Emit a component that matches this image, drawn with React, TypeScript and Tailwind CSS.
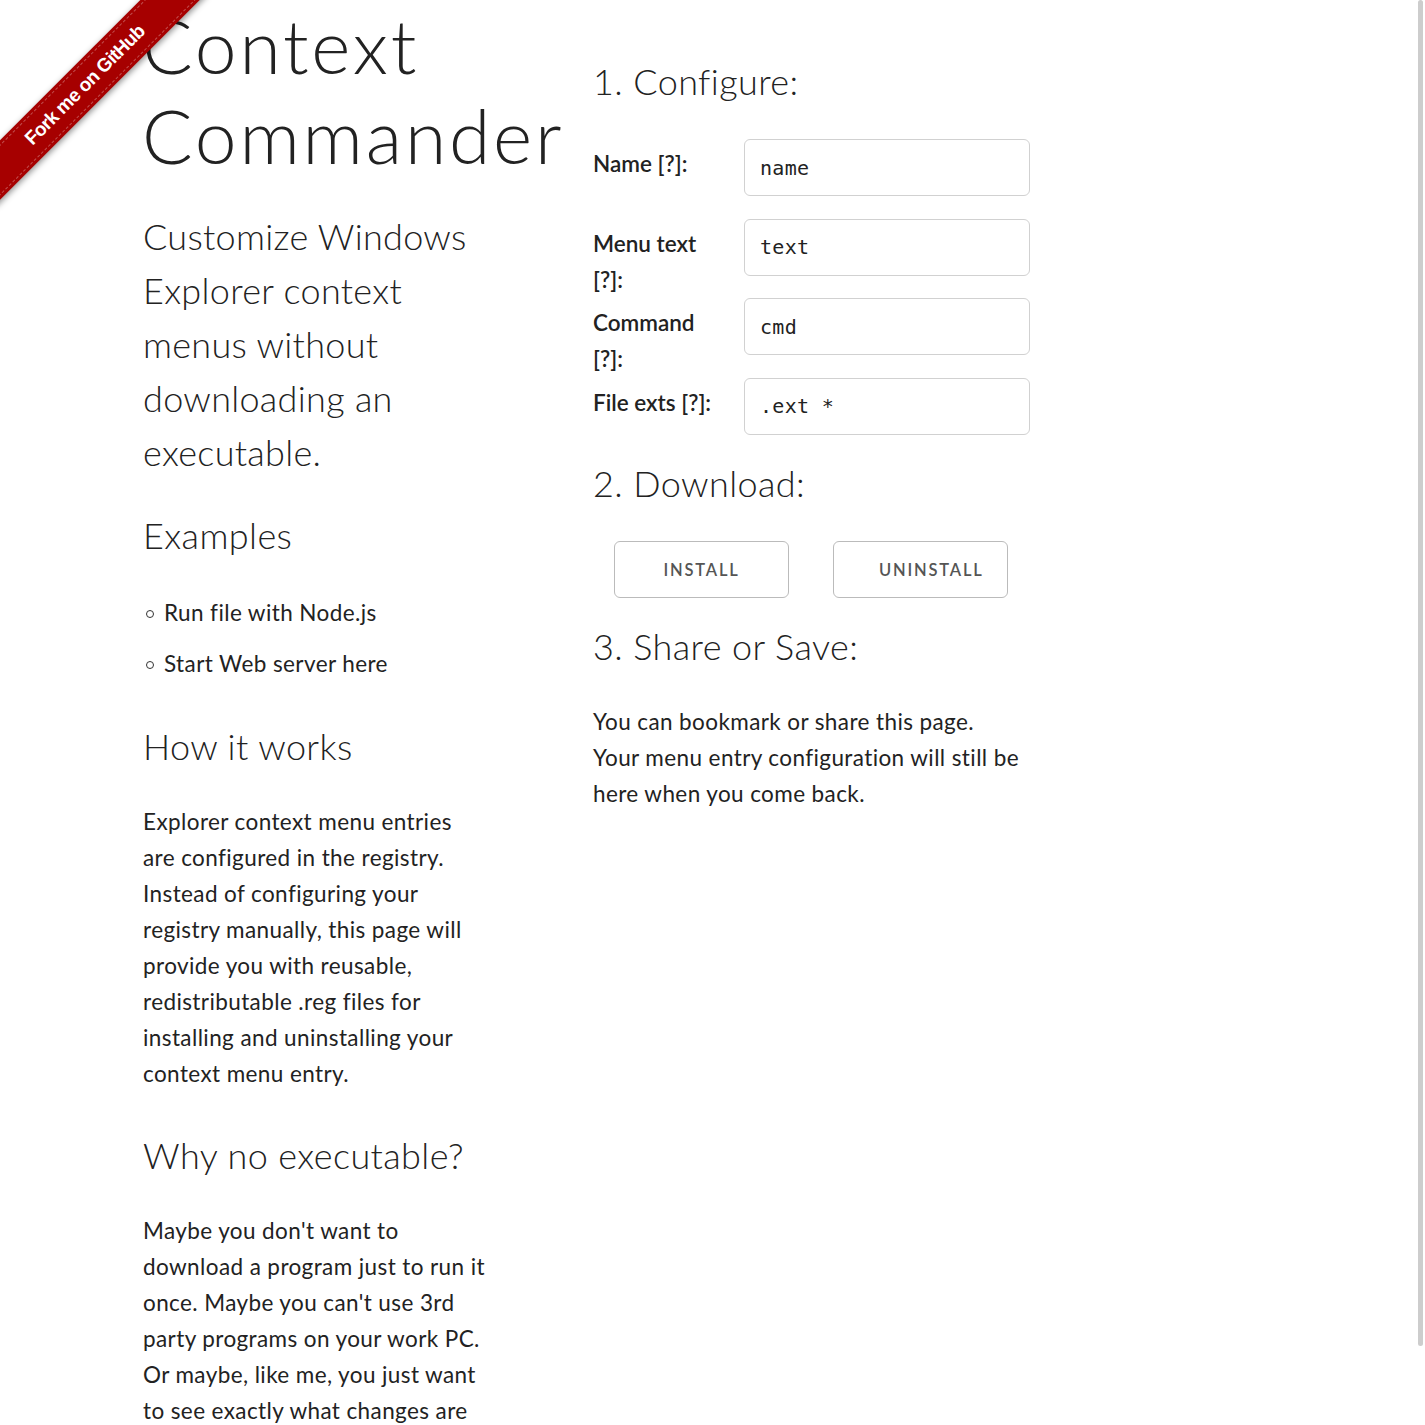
import React from "react";

function Bullet({ children }: { children: React.ReactNode }) {
  return (
    <li className="flex items-center mb-[15px] h-[36px]">
      <span className="inline-block w-[8px] h-[8px] rounded-full border border-[#333] ml-[3px] mr-[10px] mt-[2px]" />
      <span className="whitespace-nowrap">{children}</span>
    </li>
  );
}

function Row({ label, value }: { label: React.ReactNode; value: string }) {
  return (
    <div className="flex items-start">
      <div className="w-[151px] pt-[7px] font-semibold whitespace-nowrap tracking-[0px]">{label}</div>
      <div className="w-[286px] h-[57px] mb-[22.5px] border border-[#d1d1d1] rounded-[6px] flex items-center px-[15px] text-[20px] [font-family:'DejaVu_Sans_Mono',monospace] text-[#222] whitespace-pre tracking-[0.3px]">
        {value}
      </div>
    </div>
  );
}

export default function App() {
  return (
    <div className="relative h-[1425px] overflow-hidden bg-white text-[#222] [font-family:Lato,'Open_Sans',sans-serif] text-[22.5px] leading-[36px] tracking-[0.4px]">
      <div className="flex pl-[143px]">
        {/* Left column */}
        <div className="w-[360px] shrink-0">
          <h1 className="text-[75px] leading-[90px] font-light whitespace-nowrap tracking-[2.8px] -ml-[1px]">
            Context
            <br />
            Commander
          </h1>
          <div className="mt-[29px] text-[36px] leading-[54px] font-light whitespace-nowrap tracking-[0.3px]">
            Customize Windows
            <br />
            Explorer context
            <br />
            menus without
            <br />
            downloading an
            <br />
            executable.
          </div>
          <h4 className="mt-[29px] text-[36px] leading-[54px] font-light">Examples</h4>
          <ul className="mt-[33px]">
            <Bullet>Run file with Node.js</Bullet>
            <Bullet>Start Web server here</Bullet>
          </ul>
          <h4 className="mt-[37px] text-[36px] leading-[54px] font-light">How it works</h4>
          <p className="mt-[31px] whitespace-nowrap">
            Explorer context menu entries
            <br />
            are configured in the registry.
            <br />
            Instead of configuring your
            <br />
            registry manually, this page will
            <br />
            provide you with reusable,
            <br />
            redistributable .reg files for
            <br />
            installing and uninstalling your
            <br />
            context menu entry.
          </p>
          <h4 className="mt-[36px] text-[36px] leading-[54px] font-light">Why no executable?</h4>
          <p className="mt-[31px] whitespace-nowrap">
            Maybe you don't want to
            <br />
            download a program just to run it
            <br />
            once. Maybe you can't use 3rd
            <br />
            party programs on your work PC.
            <br />
            Or maybe, like me, you just want
            <br />
            to see exactly what changes are
          </p>
        </div>

        {/* Right column */}
        <div className="ml-[90px] w-[450px] shrink-0">
          <h4 className="mt-[54px] text-[36px] leading-[54px] font-light">1. Configure:</h4>
          <div className="mt-[31px]">
            <Row label={<>Name [?]:</>} value="name" />
            <Row
              label={
                <>
                  Menu text
                  <br />
                  [?]:
                </>
              }
              value="text"
            />
            <Row
              label={
                <>
                  Command
                  <br />
                  [?]:
                </>
              }
              value="cmd"
            />
            <Row label={<>File exts [?]:</>} value=".ext *" />
          </div>
          <h4 className="-mt-[1px] text-[36px] leading-[54px] font-light">2. Download:</h4>
          <div className="mt-[31px] ml-[21px] flex gap-[44px]">
            <button className="w-[175px] h-[57px] px-[45px] border border-[#bbb] rounded-[6px] text-[16.5px] font-semibold tracking-[1.8px] text-[#555] text-center whitespace-nowrap bg-transparent flex items-center justify-center">
              INSTALL
            </button>
            <button className="w-[175px] h-[57px] pl-[45px] border border-[#bbb] rounded-[6px] text-[16.5px] font-semibold tracking-[1.8px] text-[#555] text-left whitespace-nowrap bg-transparent flex items-center">
              UNINSTALL
            </button>
          </div>
          <h4 className="mt-[21px] text-[36px] leading-[54px] font-light">3. Share or Save:</h4>
          <p className="mt-[31px] whitespace-nowrap">
            You can bookmark or share this page.
            <br />
            Your menu entry configuration will still be
            <br />
            here when you come back.
          </p>
        </div>
      </div>

      {/* Fork me ribbon */}
      <div className="absolute left-0 top-0 w-[220px] h-[220px] overflow-hidden pointer-events-none">
        <div className="absolute left-[-65px] top-[64px] w-[300px] h-[42px] -rotate-45 bg-[#a60000] shadow-[0_2px_6px_rgba(0,0,0,0.45)] flex items-center justify-center">
          <div className="absolute left-0 right-0 top-[3px] border-t border-dashed border-[rgba(255,255,255,0.3)]" />
          <div className="absolute left-0 right-0 bottom-[3px] border-b border-dashed border-[rgba(255,255,255,0.3)]" />
          <span className="text-white font-bold text-[19px] tracking-[-0.6px] [font-family:'Liberation_Sans',sans-serif] whitespace-nowrap">
            Fork me on GitHub
          </span>
        </div>
      </div>

      {/* Scrollbar thumb */}
      <div className="absolute right-[2px] top-0 w-[5px] h-[1346px] rounded-full bg-[#cdcdcd]" />
    </div>
  );
}
